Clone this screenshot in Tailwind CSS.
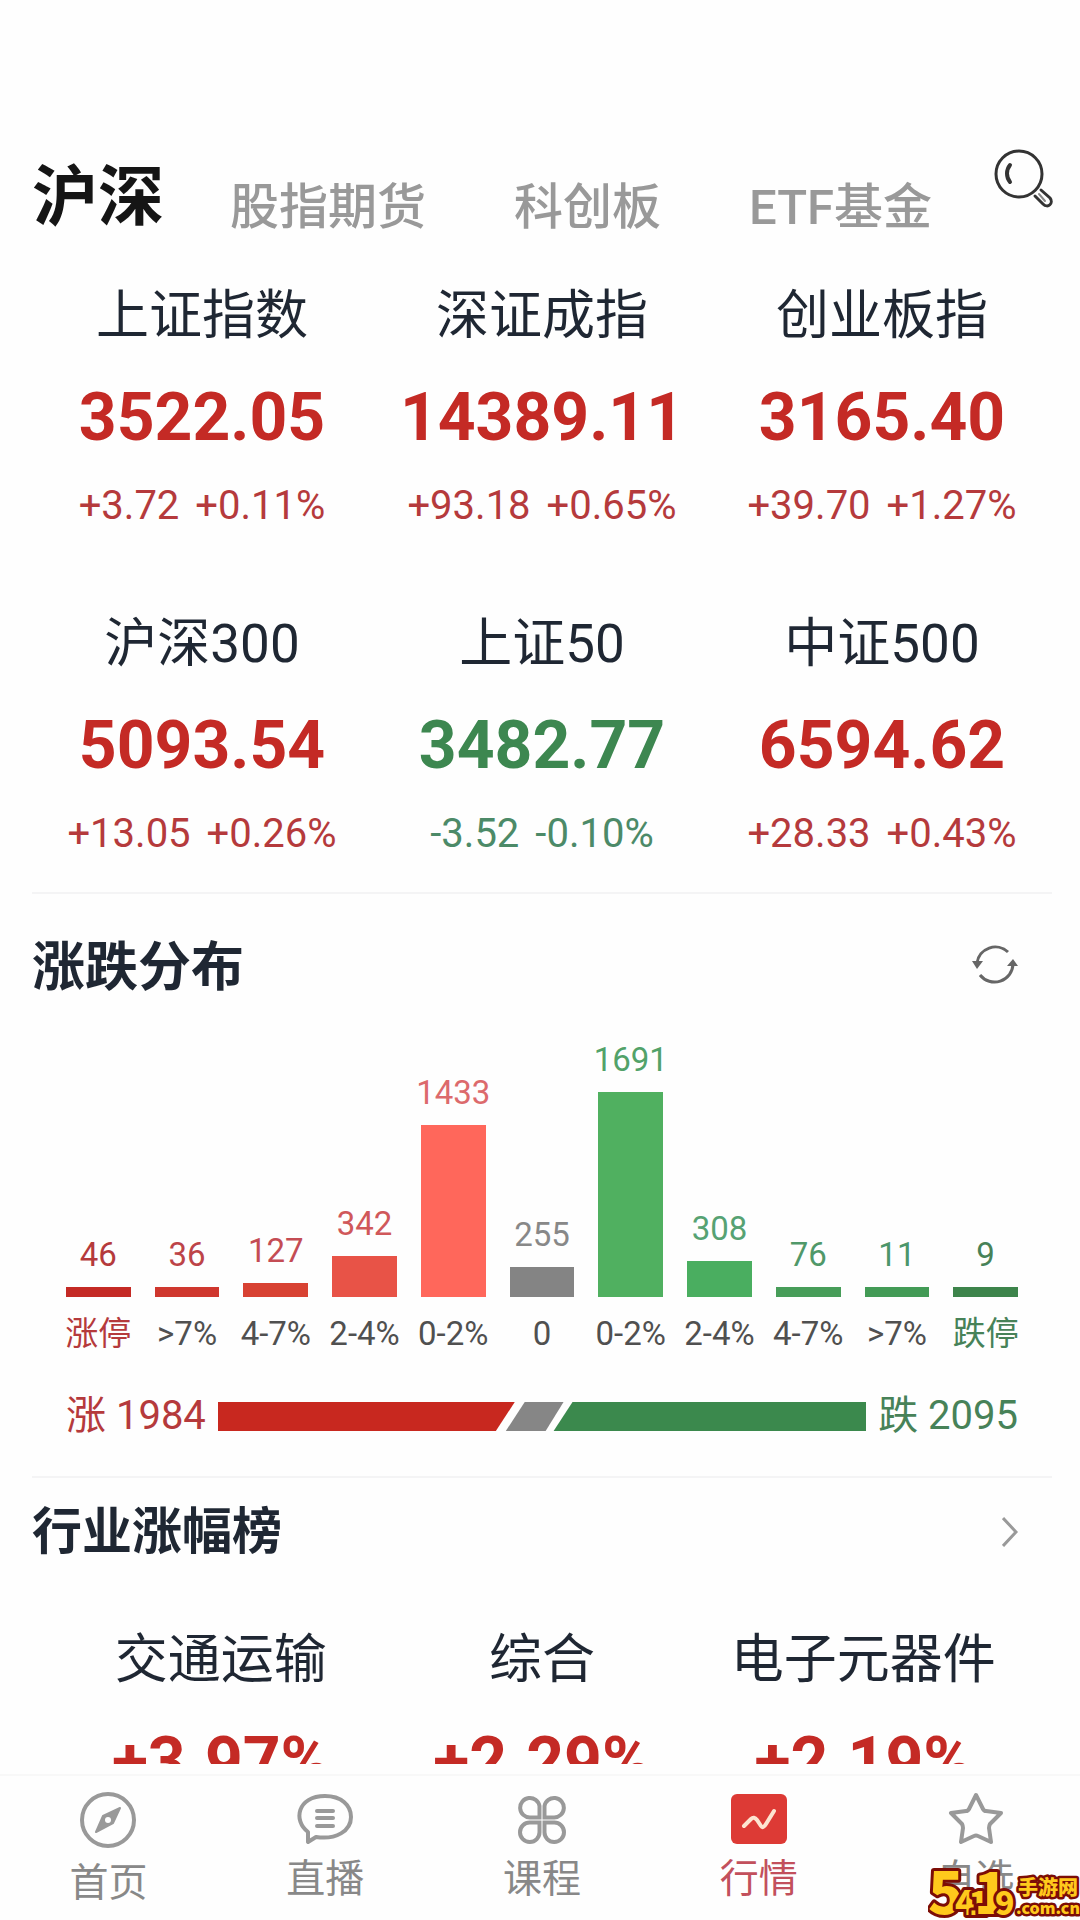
<!DOCTYPE html>
<html lang="zh-CN">
<head>
    <meta charset="UTF-8">
    <meta name="viewport" content="width=device-width, initial-scale=1.0">
    <title>行情</title>
    <script src="https://cdn.jsdelivr.net/npm/@tailwindcss/browser@4"></script>
    <style>
        body {
            font-family: Roboto, 'Noto Sans CJK SC', sans-serif;
        }
    </style>
</head>
<body class="bg-[#fefefe] h-screen flex flex-col overflow-hidden text-[#1f2733]">
    <!-- Header -->
    <header class="pl-8 pr-6 pt-[148px] flex items-start justify-between">
        <nav class="flex items-end font-medium text-[49px] leading-[80px] text-[#999]">
            <a href="#" class="text-[66px] leading-[100px] font-bold text-[#151515]">沪深</a>
            <a href="#" class="ml-[66px]">股指期货</a>
            <a href="#" class="ml-[88px]">科创板</a>
            <a href="#" class="ml-[88px]">ETF基金</a>
        </nav>
        <button aria-label="搜索">
            <svg class="w-[62px] h-[62px]" viewBox="0 0 62 62" fill="none" stroke="#333" stroke-width="3" stroke-linecap="round">
                <circle cx="25" cy="26" r="23" />
                <path d="M16 17C12 22 12 29 16 34" stroke-width="4" />
                <path d="M41 48L49 56C54 61 60 55 56 50L47 42" />
                <path d="M45 46L51 53" stroke-width="2" stroke="#888" />
            </svg>
        </button>
    </header>

    <!-- Main Content -->
    <main class="flex-1 min-h-0 overflow-hidden pl-8 pr-7">
        <!-- Indexes -->
        <section class="pt-[30px] pb-7 grid grid-cols-3 gap-y-[70px] text-center border-b-2 border-[#f4f4f5]">
            <div>
                <h3 class="text-[53px] leading-[76px]">上证指数</h3>
                <p class="mt-[26px] text-[66px] leading-[76px] font-bold text-[#c42a25]">3522.05</p>
                <p class="mt-5 flex justify-center gap-4 text-[40px] leading-[60px] text-[#b53a3c]"><span>+3.72</span><span>+0.11%</span></p>
            </div>
            <div>
                <h3 class="text-[53px] leading-[76px]">深证成指</h3>
                <p class="mt-[26px] text-[66px] leading-[76px] font-bold text-[#c42a25]">14389.11</p>
                <p class="mt-5 flex justify-center gap-4 text-[40px] leading-[60px] text-[#b53a3c]"><span>+93.18</span><span>+0.65%</span></p>
            </div>
            <div>
                <h3 class="text-[53px] leading-[76px]">创业板指</h3>
                <p class="mt-[26px] text-[66px] leading-[76px] font-bold text-[#c42a25]">3165.40</p>
                <p class="mt-5 flex justify-center gap-4 text-[40px] leading-[60px] text-[#b53a3c]"><span>+39.70</span><span>+1.27%</span></p>
            </div>
            <div>
                <h3 class="text-[53px] leading-[76px]">沪深300</h3>
                <p class="mt-[26px] text-[66px] leading-[76px] font-bold text-[#c42a25]">5093.54</p>
                <p class="mt-5 flex justify-center gap-4 text-[40px] leading-[60px] text-[#b53a3c]"><span>+13.05</span><span>+0.26%</span></p>
            </div>
            <div>
                <h3 class="text-[53px] leading-[76px]">上证50</h3>
                <p class="mt-[26px] text-[66px] leading-[76px] font-bold text-[#3d8750]">3482.77</p>
                <p class="mt-5 flex justify-center gap-4 text-[40px] leading-[60px] text-[#4c8a68]"><span>-3.52</span><span>-0.10%</span></p>
            </div>
            <div>
                <h3 class="text-[53px] leading-[76px]">中证500</h3>
                <p class="mt-[26px] text-[66px] leading-[76px] font-bold text-[#c42a25]">6594.62</p>
                <p class="mt-5 flex justify-center gap-4 text-[40px] leading-[60px] text-[#b53a3c]"><span>+28.33</span><span>+0.43%</span></p>
            </div>
        </section>

        <!-- Rise / fall distribution -->
        <section class="pt-[34px] pb-8 border-b-2 border-[#f4f4f5]">
            <div class="flex items-start justify-between pr-[34px]">
                <h2 class="text-[53px] leading-[80px] font-bold">涨跌分布</h2>
                <button class="mt-4" aria-label="刷新">
                    <svg class="w-[46px] h-[40px]" viewBox="0 0 46 40" fill="none" stroke="#666" stroke-width="3">
                        <path d="M36 8A18.5 18.5 0 0 0 5 19" />
                        <path d="M8 31A18.5 18.5 0 0 0 41 20" />
                        <path d="M0 17H11L5 25ZM35 22H46L41 15Z" fill="#666" stroke="none" />
                    </svg>
                </button>
            </div>
            <div class="pl-[34px] pr-[34px]">
                <div class="mt-[27px] h-[262px] grid grid-cols-11 gap-6 items-end text-[33px] leading-[40px]">
                    <div class="flex flex-col items-center gap-3 text-[#b53a3c]"><span>46</span><div class="w-full bg-[#c42a25]" style="height:10px"></div></div>
                    <div class="flex flex-col items-center gap-3 text-[#bd4448]"><span>36</span><div class="w-full bg-[#cf372e]" style="height:10px"></div></div>
                    <div class="flex flex-col items-center gap-3 text-[#c44c54]"><span>127</span><div class="w-full bg-[#d84233]" style="height:14px"></div></div>
                    <div class="flex flex-col items-center gap-3 text-[#d0585a]"><span>342</span><div class="w-full bg-[#e85347]" style="height:41px"></div></div>
                    <div class="flex flex-col items-center gap-3 text-[#dc6a6c]"><span>1433</span><div class="w-full bg-[#ff675b]" style="height:172px"></div></div>
                    <div class="flex flex-col items-center gap-3 text-[#888]"><span>255</span><div class="w-full bg-[#848484]" style="height:30px"></div></div>
                    <div class="flex flex-col items-center gap-3 text-[#52a269]"><span>1691</span><div class="w-full bg-[#50b060]" style="height:205px"></div></div>
                    <div class="flex flex-col items-center gap-3 text-[#56a273]"><span>308</span><div class="w-full bg-[#4aae60]" style="height:36px"></div></div>
                    <div class="flex flex-col items-center gap-3 text-[#509869]"><span>76</span><div class="w-full bg-[#479d59]" style="height:10px"></div></div>
                    <div class="flex flex-col items-center gap-3 text-[#4c966a]"><span>11</span><div class="w-full bg-[#439b56]" style="height:10px"></div></div>
                    <div class="flex flex-col items-center gap-3 text-[#478258]"><span>9</span><div class="w-full bg-[#3d844b]" style="height:10px"></div></div>
                </div>
                <div class="mt-[13px] grid grid-cols-11 gap-6 text-[33px] leading-[48px] whitespace-nowrap text-[#505050]">
                    <span class="flex justify-center text-[#b53a3c]">涨停</span>
                    <span class="flex justify-center">&gt;7%</span>
                    <span class="flex justify-center">4-7%</span>
                    <span class="flex justify-center">2-4%</span>
                    <span class="flex justify-center">0-2%</span>
                    <span class="flex justify-center">0</span>
                    <span class="flex justify-center">0-2%</span>
                    <span class="flex justify-center">2-4%</span>
                    <span class="flex justify-center">4-7%</span>
                    <span class="flex justify-center">&gt;7%</span>
                    <span class="flex justify-center text-[#478258]">跌停</span>
                </div>
                <div class="mt-[30px] flex items-center gap-3 text-[40px] leading-[56px] whitespace-nowrap">
                    <span class="text-[#b53a3c]">涨 1984</span>
                    <svg class="flex-1 min-w-0 h-[29px]" viewBox="0 0 651 29" preserveAspectRatio="none">
                        <path d="M0 0H298L279 29H0Z" fill="#c8281f" />
                        <path d="M308 0H347L329 29H289Z" fill="#868686" />
                        <path d="M356 0H651V29H337Z" fill="#3b894d" />
                    </svg>
                    <span class="text-[#478258]">跌 2095</span>
                </div>
            </div>
        </section>

        <!-- Leading industries -->
        <section class="pt-4">
            <a href="#" class="flex items-center justify-between pr-[34px]">
                <h2 class="text-[50px] leading-[76px] font-bold">行业涨幅榜</h2>
                <svg class="w-4 h-[30px]" viewBox="0 0 16 30" fill="none" stroke="#999" stroke-width="3">
                    <path d="M1 1L14 15L1 29" />
                </svg>
            </a>
            <div class="mt-[52px] px-7 grid grid-cols-3 text-center">
                <div>
                    <h3 class="text-[53px] leading-[76px]">交通运输</h3>
                    <p class="mt-[26px] text-[66px] leading-[76px] font-bold text-[#c42a25]">+3.97%</p>
                </div>
                <div>
                    <h3 class="text-[53px] leading-[76px]">综合</h3>
                    <p class="mt-[26px] text-[66px] leading-[76px] font-bold text-[#c42a25]">+2.29%</p>
                </div>
                <div>
                    <h3 class="text-[53px] leading-[76px]">电子元器件</h3>
                    <p class="mt-[26px] text-[66px] leading-[76px] font-bold text-[#c42a25]">+2.19%</p>
                </div>
            </div>
        </section>
    </main>

    <!-- Tab bar -->
    <footer class="relative mt-[10px] h-[146px] border-t-2 border-[#f8f8f8]">
        <nav class="pt-4 -mr-1 grid grid-cols-5 text-[39px] leading-[56px] text-[#888]">
            <a href="#" class="flex flex-col items-center gap-[7px]">
                <svg class="w-14 h-14" viewBox="0 0 56 56" fill="none" stroke="#999" stroke-width="4">
                    <circle cx="28" cy="28" r="26" />
                    <path d="M40 16L33 31L16 40L23 24Z" fill="#999" stroke="#999" stroke-width="2" stroke-linejoin="round" />
                    <circle cx="28" cy="28" r="3" fill="#fefefe" stroke="none" />
                </svg>
                <span>首页</span>
            </a>
            <a href="#" class="flex flex-col items-center gap-[7px]">
                <svg class="w-14 h-[52px]" viewBox="0 0 56 52" fill="none" stroke="#999" stroke-width="4" stroke-linejoin="round">
                    <path d="M11 40C-4 29 0 4 28 4C44 4 54 13 54 25C54 39 39 48 19 45L11 50Z" />
                    <path d="M20 19H36M20 26H36M20 34H36" stroke-linecap="round" />
                </svg>
                <span>直播</span>
            </a>
            <a href="#" class="flex flex-col items-center gap-[7px]">
                <svg class="w-12 h-[52px]" viewBox="0 0 48 52" fill="none" stroke="#999" stroke-width="4">
                    <path d="M21.500 25.500V14A9.750 9.750 0 1 0 12 25.500Z" />
                    <path d="M26.500 25.500V14A9.750 9.750 0 1 1 36 25.500Z" />
                    <path d="M21.500 30.500V40A9.750 9.750 0 1 1 12 30.500Z" />
                    <path d="M26.500 30.500V40A9.750 9.750 0 1 0 36 30.500Z" />
                </svg>
                <span>课程</span>
            </a>
            <a href="#" class="flex flex-col items-center gap-[7px] text-[#c2505c]">
                <svg class="w-14 h-[52px]" viewBox="0 0 56 52" fill="none">
                    <rect y="2" width="56" height="50" rx="6" fill="#dd3a35" />
                    <path d="M13 34L20 27Q23 24 26 28L30 34Q32 37 35 32L43 19" stroke="#fde3d0" stroke-width="4" stroke-linecap="round" />
                </svg>
                <span>行情</span>
            </a>
            <a href="#" class="flex flex-col items-center gap-[7px]">
                <svg class="w-14 h-[52px]" viewBox="0 0 56 52" fill="none" stroke="#999" stroke-width="4" stroke-linejoin="round">
                    <path d="M28 3L35 17Q36 19 38 19L53 21L42 32Q41 34 41 36L43 50L30 44Q28 43 26 44L13 50L15 36Q15 34 14 32L3 21L18 19Q20 19 21 17Z" />
                </svg>
                <span>自选</span>
            </a>
        </nav>

        <!-- Site mark -->
        <svg class="absolute right-0 bottom-0 w-[152px] h-[54px]" viewBox="0 0 152 54" font-family="'Noto Sans CJK SC', sans-serif" font-weight="900" fill="#ffc91c" stroke="#7c0d06" stroke-width="6" stroke-linejoin="round" paint-order="stroke">
            <text x="0" y="48" font-size="58">5</text>
            <text x="27" y="49" font-size="34">4</text>
            <text x="41" y="49" font-size="32">1</text>
            <text x="46" y="48" font-size="56">1</text>
            <text x="67" y="49" font-size="32">9</text>
            <g stroke-width="5">
                <text x="90" y="29" font-size="20">手游网</text>
                <text x="88" y="48" font-size="16">.com.cn</text>
            </g>
        </svg>
    </footer>
</body>
</html>
